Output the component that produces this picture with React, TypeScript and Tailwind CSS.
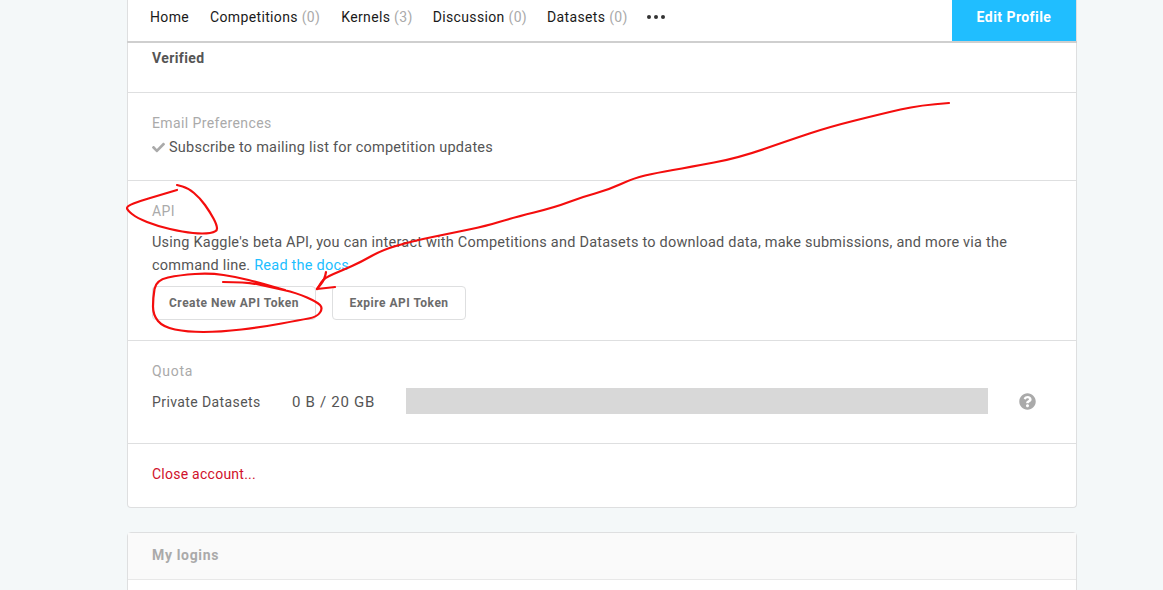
import { FaCheck, FaQuestionCircle } from "react-icons/fa";

type P = [number, number];
const smooth = (pts: P[]) => {
  let d = `M${pts[0][0]} ${pts[0][1]}`;
  for (let i = 1; i < pts.length - 1; i++) {
    const mx = (pts[i][0] + pts[i + 1][0]) / 2;
    const my = (pts[i][1] + pts[i + 1][1]) / 2;
    d += ` Q${pts[i][0]} ${pts[i][1]} ${mx} ${my}`;
  }
  const l = pts[pts.length - 1];
  return d + ` L${l[0]} ${l[1]}`;
};

const longLine: P[] = [[949,103],[920,105],[881,114],[829,127],[790,140],[738,158],[690,167],[656,173],[634,178],[608,190],[582,197],[556,207],[512,218],[486,226],[452,233],[413,241],[382,250],[361,262],[343,270],[324,278],[319,286],[317,289]];
const arrowA: P[] = [[326,272],[325,279],[317,289]];
const arrowB: P[] = [[317,289],[326,288],[335,287]];
const apiCircle: P[] = [[177,190],[157,196],[140,201],[127,206],[127,210],[137,218],[157,226],[183,232],[203,234],[217,232],[217,225],[210,212],[200,198],[188,188],[177,185]];
const tokenCircle: P[] = [[223,282],[247,282],[270,287],[297,293],[317,302],[323,308],[317,317],[300,320],[263,327],[220,332],[187,332],[163,327],[153,315],[153,298],[156,280],[180,275],[210,273],[237,277],[260,283],[285,290]];

function NavItem({ label, count, className = "" }: { label: string; count?: number; className?: string }) {
  return (
    <span className={`text-[14px] tracking-[0.35px] text-[#1a1a1a] whitespace-nowrap ${className}`}>
      {label}
      {count !== undefined && <span className="text-[#aaaaaa]"> ({count})</span>}
    </span>
  );
}

export default function App() {
  return (
    <div className="relative h-[590px] overflow-hidden bg-[#f4f8f9] font-['Roboto',sans-serif] text-[14px] tracking-[0.4px] text-[#555555]">
      <div className="ml-[127px] w-[950px]">
        <div className="rounded-b-[4px] border-x border-b border-[#dedfe0] bg-white">
          <nav className="flex h-[43px] items-start justify-between border-b-2 border-[#cfcfcf] -mx-px px-px">
            <div className="flex h-[34px] items-center gap-[21px] pl-[22px]">
              <NavItem label="Home" />
              <NavItem label="Competitions" count={0} />
              <NavItem label="Kernels" count={3} />
              <NavItem label="Discussion" count={0} className="-ml-px" />
              <NavItem label="Datasets" count={0} className="-ml-px" />
              <span className="-ml-[2px] flex gap-[3px]">
                <span className="h-[4px] w-[4px] rounded-full bg-[#333333]" />
                <span className="h-[4px] w-[4px] rounded-full bg-[#333333]" />
                <span className="h-[4px] w-[4px] rounded-full bg-[#333333]" />
              </span>
            </div>
            <button className="h-[41px] w-[124px] bg-[#20beff] pb-[7px] text-[14px] font-bold tracking-[0.45px] text-white">Edit Profile</button>
          </nav>
          <section className="h-[50px] border-b border-[#dedfe0] px-6 pt-[5px] font-bold leading-[20px]">Verified</section>
          <section className="h-[88px] border-b border-[#dedfe0] px-6 pt-[18px] leading-[24px]">
            <div className="text-[#aaaaaa]">Email Preferences</div>
            <div className="flex items-center gap-[4px]">
              <FaCheck className="h-[13px] w-[13px] text-[#aaaaaa]" />
              <span className="pt-[1px] text-[14.5px] tracking-[0.23px]">Subscribe to mailing list for competition updates</span>
            </div>
          </section>
          <section className="h-[160px] border-b border-[#dedfe0] px-6 pt-[18px]">
            <div className="leading-[24px] text-[#aaaaaa]">API</div>
            <p className="mt-[8px] text-[14.5px] leading-[23px] tracking-[0.22px]">
              Using Kaggle's beta API, you can interact with Competitions and Datasets to download data, make submissions, and more via the command line. <span className="text-[#20beff]">Read the docs</span>
            </p>
            <div className="mt-[9px] flex gap-[16px]">
              <button className="h-[34px] w-[164px] rounded-[4px] border border-[#dedfe0] text-[12px] font-bold tracking-[0.5px] text-[#6b6b6b]">Create New API Token</button>
              <button className="h-[34px] w-[134px] rounded-[4px] border border-[#dedfe0] text-[12px] font-bold tracking-[0.5px] text-[#6b6b6b]">Expire API Token</button>
            </div>
          </section>
          <section className="h-[103px] border-b border-[#dedfe0] px-6 pt-[18px]">
            <div className="leading-[24px] tracking-[0.7px] text-[#aaaaaa]">Quota</div>
            <div className="mt-[5px] flex h-[26px] items-center">
              <span className="w-[140px] pt-[2px]">Private Datasets</span>
              <span className="w-[114px] pt-[2px] text-[15px] tracking-[0.7px]">0 B / 20 GB</span>
              <div className="h-[26px] w-[582px] bg-[#d8d8d8]" />
              <FaQuestionCircle className="ml-[31px] mt-[1px] h-[17px] w-[17px] text-[#aaaaaa]" />
            </div>
          </section>
          <section className="h-[63px] px-6 pt-[18px] leading-[24px] tracking-[0.25px] text-[#d0112b]">Close account...</section>
        </div>
        <div className="mt-[24px] h-[200px] rounded-t-[4px] border border-[#dedfe0] bg-white">
          <div className="h-[47px] border-b border-[#e8e8e8] bg-[#fafafa] px-6 pt-[11px] font-bold leading-[22px] tracking-[0.65px] text-[#aaaaaa]">My logins</div>
        </div>
      </div>
      <svg className="pointer-events-none absolute left-0 top-0" width="1163" height="590" fill="none" stroke="#f40d0d" strokeWidth="2.2" strokeLinecap="round" strokeLinejoin="round">
        <path d={smooth(longLine)} />
        <path d={smooth(arrowA)} />
        <path d={smooth(arrowB)} />
        <path d={smooth(apiCircle)} />
        <path d={smooth(tokenCircle)} />
      </svg>
    </div>
  );
}
